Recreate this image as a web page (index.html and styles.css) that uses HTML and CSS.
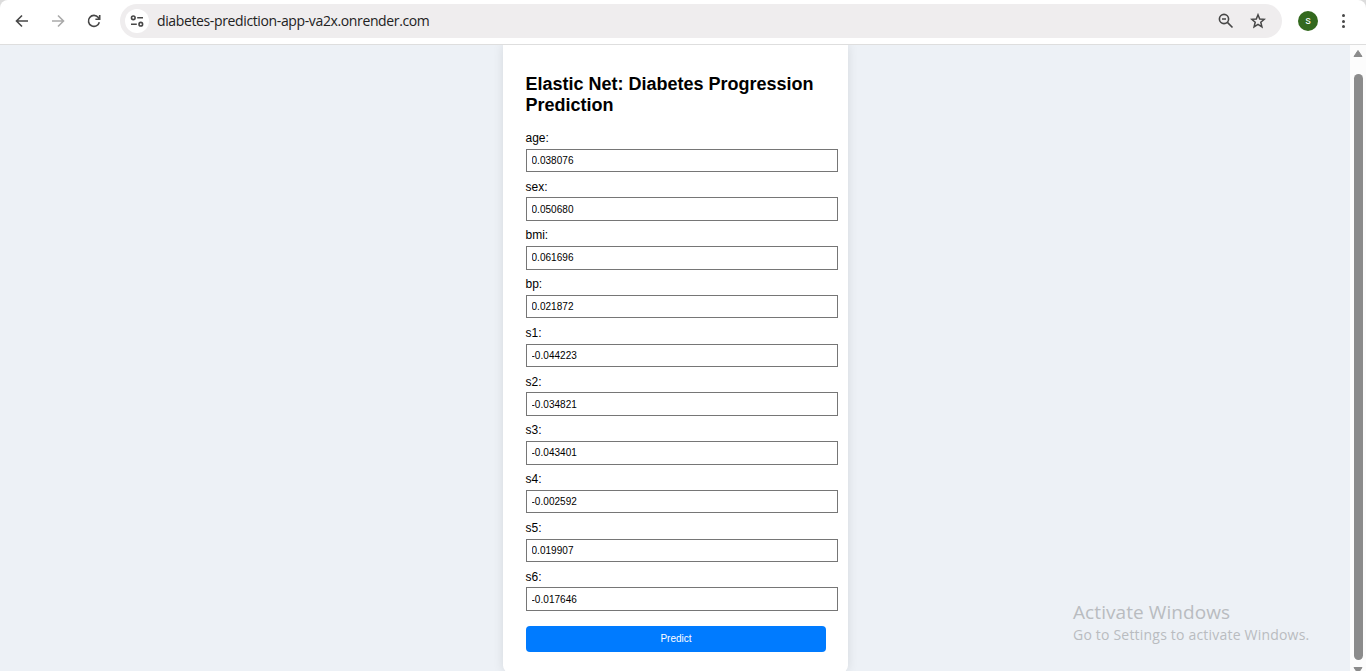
FILE: index.html
```html
<!DOCTYPE html>
<html lang="en">
<head>
<meta charset="utf-8">
<title>Diabetes Progression Prediction</title>
<link rel="stylesheet" href="styles.css">
</head>
<body>
<div class="browser">
  <header class="toolbar">
    <nav class="nav">
      <svg class="icon" viewBox="0 0 16 16"><path d="M14 8H3M8 2.5L2.5 8L8 13.500"/></svg>
      <svg class="icon muted" viewBox="0 0 16 16"><path d="M2 8h11M8 2.500L13.500 8L8 13.500"/></svg>
      <svg class="icon" viewBox="0 0 16 16"><path d="M13.300 9.200A5.500 5.500 0 1 1 12.300 4.500L13.500 6M13.700 2V6.300H9.400"/></svg>
    </nav>
    <div class="address">
      <span class="site"><svg class="icon" viewBox="0 0 16 16"><circle cx="4.300" cy="4.800" r="1.800"/><path d="M8.200 4.800H14M2 11.200H7.800"/><circle cx="11.800" cy="11.200" r="1.800"/></svg></span>
      <span class="url">diabetes-prediction-app-va2x.onrender.com</span>
      <svg class="icon lens" viewBox="0 0 16 16"><circle cx="6" cy="6" r="4.600"/><path d="M9.400 9.400L14.500 14.500M4 6H8"/></svg>
      <svg class="icon" viewBox="0 0 16 16"><path class="star" d="M8 1.800L9.700 6L14.300 6.300L10.800 9.300L11.900 13.800L8 11.300L4.100 13.800L5.200 9.300L1.700 6.300L6.300 6Z"/></svg>
    </div>
    <span class="avatar">s</span>
    <span class="menu"><i></i><i></i><i></i></span>
  </header>
  <div class="viewport">
    <main class="page">
      <form class="card">
        <h2 class="title">Elastic Net: Diabetes Progression Prediction</h2>
        <label class="field"><span class="label">age:</span><input class="input" type="text" value="0.038076"></label>
        <label class="field"><span class="label">sex:</span><input class="input" type="text" value="0.050680"></label>
        <label class="field"><span class="label">bmi:</span><input class="input" type="text" value="0.061696"></label>
        <label class="field"><span class="label">bp:</span><input class="input" type="text" value="0.021872"></label>
        <label class="field"><span class="label">s1:</span><input class="input" type="text" value="-0.044223"></label>
        <label class="field"><span class="label">s2:</span><input class="input" type="text" value="-0.034821"></label>
        <label class="field"><span class="label">s3:</span><input class="input" type="text" value="-0.043401"></label>
        <label class="field"><span class="label">s4:</span><input class="input" type="text" value="-0.002592"></label>
        <label class="field"><span class="label">s5:</span><input class="input" type="text" value="0.019907"></label>
        <label class="field"><span class="label">s6:</span><input class="input" type="text" value="-0.017646"></label>
        <button class="predict" type="button">Predict</button>
      </form>
    </main>
    <div class="scrollbar">
      <svg class="arrow" viewBox="0 0 10 8"><path d="M5 1L9 7H1Z"/></svg>
      <div class="thumb"></div>
      <svg class="arrow down" viewBox="0 0 10 8"><path d="M5 7L9 1H1Z"/></svg>
    </div>
  </div>
  <aside class="watermark">
    <p class="activate">Activate Windows</p>
    <p class="settings">Go to Settings to activate Windows.</p>
  </aside>
</div>
</body>
</html>
```
FILE: styles.css
```css
* { box-sizing: border-box; }
body { margin: 0; overflow: hidden; background: #dcdcdc; font-family: "Liberation Sans", Arial, sans-serif; }
.browser { position: relative; height: 671px; display: flex; flex-direction: column; }
.toolbar { height: 45px; flex: none; display: flex; align-items: flex-start; padding: 4px 17px 0 14px; background: #fff; border-bottom: 1px solid #dedede; border-radius: 8px 8px 0 0; }
.icon { display: block; width: 16px; height: 16px; fill: none; stroke: #474747; stroke-width: 1.6; }
.muted { stroke: #aaa; }
.nav { display: flex; gap: 20px; width: 106px; height: 34px; align-items: center; }
.address { width: 1162px; height: 34px; display: flex; align-items: center; padding: 0 16px 0 5px; border-radius: 17px; background: #efedee; }
.site { width: 24px; height: 24px; display: grid; place-items: center; border-radius: 50%; background: #fff; }
.url { flex: 1; margin-left: 8px; font: 14px/20px "Open Sans", "Noto Sans", sans-serif; letter-spacing: -0.37px; color: #222; }
.lens { margin-right: 16px; }
.star { stroke-width: 1.500; }
.avatar { width: 20px; height: 20px; margin: 7px 0 0 16px; border-radius: 50%; background: #33691e; color: #fff; font: 11px/19px Roboto, sans-serif; text-align: center; }
.menu { margin: 10px 0 0 auto; padding-right: 4px; display: flex; flex-direction: column; gap: 2.500px; }
.menu i { width: 3px; height: 3px; border-radius: 50%; background: #474747; }
.viewport { flex: 1; min-height: 0; display: flex; }
.page { width: 1350px; flex: none; background: #edf1f6; }
.card { width: 345px; height: 628px; margin-left: 503px; padding: 29px 22.500px 0 23px; border-radius: 0 0 7.500px 7.500px; background: #fff; box-shadow: 0 0 11px rgba(0, 0, 0, .1); clip-path: inset(0 -12px 0 -12px); }
.title { margin: 0 0 14.850px -0.500px; font-size: 18px; line-height: 21px; font-weight: 700; color: #000; }
.field { display: block; margin-bottom: 7.500px; width: 312px; }
.label { display: block; height: 17.750px; margin-left: -0.500px; font-size: 12px; line-height: 14px; color: #000; }
.input { display: block; width: 312px; height: 23.500px; margin: 0; padding: 0 4.500px; border: 1px solid #767676; border-radius: 0; font: 10px "Liberation Sans", Arial, sans-serif; letter-spacing: 0.04px; color: #000; background: #fff; }
.predict { display: block; width: 300px; height: 26px; margin: 15px 0 0; padding: 0; border: 0; border-radius: 4px; background: #007bff; color: #fff; font: 10px "Liberation Sans", Arial, sans-serif; }
.scrollbar { width: 16px; display: flex; flex-direction: column; align-items: center; padding: 4px 0 0; background: #fcfcfc; overflow: hidden; }
.arrow { flex: none; width: 10px; height: 9px; fill: #8b8b8b; stroke: #8b8b8b; stroke-width: 1; stroke-linejoin: round; }
.thumb { flex: none; width: 9px; height: 586px; margin: 16px 0 6px; border-radius: 5px; background: #8b8b8b; }
.watermark { position: absolute; left: 1073px; top: 599px; color: #b9bcc0; font-family: "Open Sans", "Noto Sans", sans-serif; white-space: nowrap; }
.activate, .settings { margin: 0; }
.activate { font-size: 19px; line-height: 26px; letter-spacing: 0.080px; }
.settings { font-size: 14px; line-height: 20px; letter-spacing: 0.200px; }
```
